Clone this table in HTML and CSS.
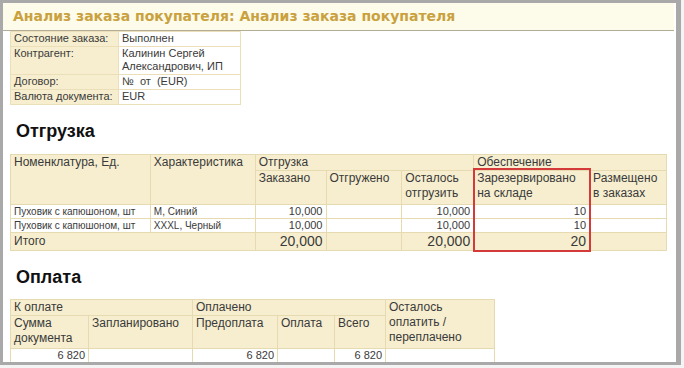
FILE: index.html
```html
<!DOCTYPE html>
<html lang="ru">
<head>
<meta charset="utf-8">
<title>Анализ заказа покупателя</title>
<link rel="stylesheet" href="styles.css">
</head>
<body>
<div class="frame">
  <div class="titlebar">Анализ заказа покупателя: Анализ заказа покупателя</div>
  <div class="content">
    <table class="info">
      <colgroup><col class="c-lbl"><col class="c-val"></colgroup>
      <tr><td class="lbl">Состояние заказа:</td><td>Выполнен</td></tr>
      <tr><td class="lbl">Контрагент:</td><td>Калинин Сергей<br>Александрович, ИП</td></tr>
      <tr><td class="lbl">Договор:</td><td>№&nbsp; от&nbsp; (EUR)</td></tr>
      <tr><td class="lbl">Валюта документа:</td><td>EUR</td></tr>
    </table>

    <h2 class="section">Отгрузка</h2>
    <div class="tablewrap">
      <table class="grid ship">
        <colgroup>
          <col style="width:140px"><col style="width:105px"><col style="width:71px"><col style="width:76px"><col style="width:72px"><col style="width:116px"><col style="width:77px">
        </colgroup>
        <tr class="h1">
          <th rowspan="2">Номенклатура, Ед.</th>
          <th rowspan="2">Характеристика</th>
          <th colspan="3">Отгрузка</th>
          <th colspan="2">Обеспечение</th>
        </tr>
        <tr class="h2">
          <th>Заказано</th>
          <th>Отгружено</th>
          <th>Осталось отгрузить</th>
          <th>Зарезервировано на складе</th>
          <th>Размещено в заказах</th>
        </tr>
        <tr class="row">
          <td>Пуховик с капюшоном, шт</td><td>M, Синий</td><td class="num">10,000</td><td></td><td class="num">10,000</td><td class="num">10</td><td></td>
        </tr>
        <tr class="row">
          <td>Пуховик с капюшоном, шт</td><td>XXXL, Черный</td><td class="num">10,000</td><td></td><td class="num">10,000</td><td class="num">10</td><td></td>
        </tr>
        <tr class="total">
          <td colspan="2">Итого</td><td class="num">20,000</td><td></td><td class="num">20,000</td><td class="num">20</td><td></td>
        </tr>
      </table>
      <div class="highlight"></div>
    </div>

    <h2 class="section pay-h">Оплата</h2>
    <table class="grid pay">
      <colgroup>
        <col style="width:78px"><col style="width:104px"><col style="width:85px"><col style="width:57px"><col style="width:51px"><col style="width:109px">
      </colgroup>
      <tr class="p1">
        <th colspan="2">К оплате</th>
        <th colspan="3">Оплачено</th>
        <th rowspan="2">Осталось<br>оплатить /<br>переплачено</th>
      </tr>
      <tr class="p2">
        <th>Сумма документа</th>
        <th>Запланировано</th>
        <th>Предоплата</th>
        <th>Оплата</th>
        <th>Всего</th>
      </tr>
      <tr class="row">
        <td class="num">6 820</td><td></td><td class="num">6 820</td><td></td><td class="num">6 820</td><td></td>
      </tr>
    </table>
  </div>
</div>
</body>
</html>
```

FILE: styles.css
```css
html, body {
  margin: 0;
  padding: 0;
  background: #f4f4f4;
}
body {
  width: 684px;
  height: 368px;
  overflow: hidden;
  font-family: "Liberation Sans", Arial, sans-serif;
  color: #3a3a3a;
}
.frame {
  width: 673px;
  height: 359px;
  background: #ffffff;
  border-top: 3px solid #a9a9a9;
  border-left: 3px solid #a9a9a9;
  border-right: 5px solid #a9a9a9;
  border-bottom: 3px solid #a9a9a9;
  overflow: hidden;
}
.titlebar {
  height: 27px;
  margin-right: 2px;
  background: #fdfbea;
  border-bottom: 1px solid #b3ad98;
  padding-left: 10px;
  font-family: "DejaVu Sans", Verdana, sans-serif;
  font-weight: bold;
  font-size: 14px;
  line-height: 27px;
  color: #c9a13e;
  white-space: nowrap;
}
.content {
  padding-left: 7px;
}
table {
  border-collapse: collapse;
  table-layout: fixed;
}
.info {
  width: 230px;
  font-size: 11px;
}
.info .c-lbl { width: 108px; }
.info .c-val { width: 122px; }
.info td {
  border: 1px solid #eadfb8;
  padding: 0 3px 1px;
  line-height: 13px;
  height: 13px;
  vertical-align: top;
  white-space: nowrap;
}
.info td.lbl {
  background: #f6eecf;
}
.section {
  margin: 0;
  padding: 15px 0 0 6px;
  height: 37px;
  box-sizing: border-box;
  font-size: 18px;
  font-weight: bold;
  color: #111111;
  line-height: 22px;
  margin-bottom: 12px;
}
.pay-h {
  padding-top: 15px;
  margin-bottom: 11px;
}
.tablewrap {
  position: relative;
  width: 657px;
}
.grid th, .grid td {
  border: 1px solid #e6dab0;
  padding: 0 3px;
  overflow: hidden;
}
.grid th {
  background: #f6eecf;
  font-weight: normal;
  text-align: left;
  vertical-align: top;
  font-size: 12px;
  line-height: 15px;
}
.ship .h1 th { height: 14px; }
.ship .h1 th[rowspan] { height: 49px; }
.ship .h2 th { height: 33px; }
.grid .row td {
  font-size: 10px;
  line-height: 13px;
  height: 13px;
  white-space: nowrap;
  background: #ffffff;
}
.grid .total td {
  background: #f6eecf;
  font-size: 12px;
  height: 17px;
  line-height: 17px;
}
.grid .total td.num {
  font-size: 14px;
}
.num {
  text-align: right;
}
.grid .row td.num {
  font-size: 11px;
}
.highlight {
  position: absolute;
  left: 463px;
  top: 14px;
  width: 114px;
  height: 80px;
  border: 2px solid #d43a3a;
}
.pay .p1 th { height: 15px; }
.pay .p2 th { height: 32px; }
.pay th[rowspan] { line-height: 15px; }
```
